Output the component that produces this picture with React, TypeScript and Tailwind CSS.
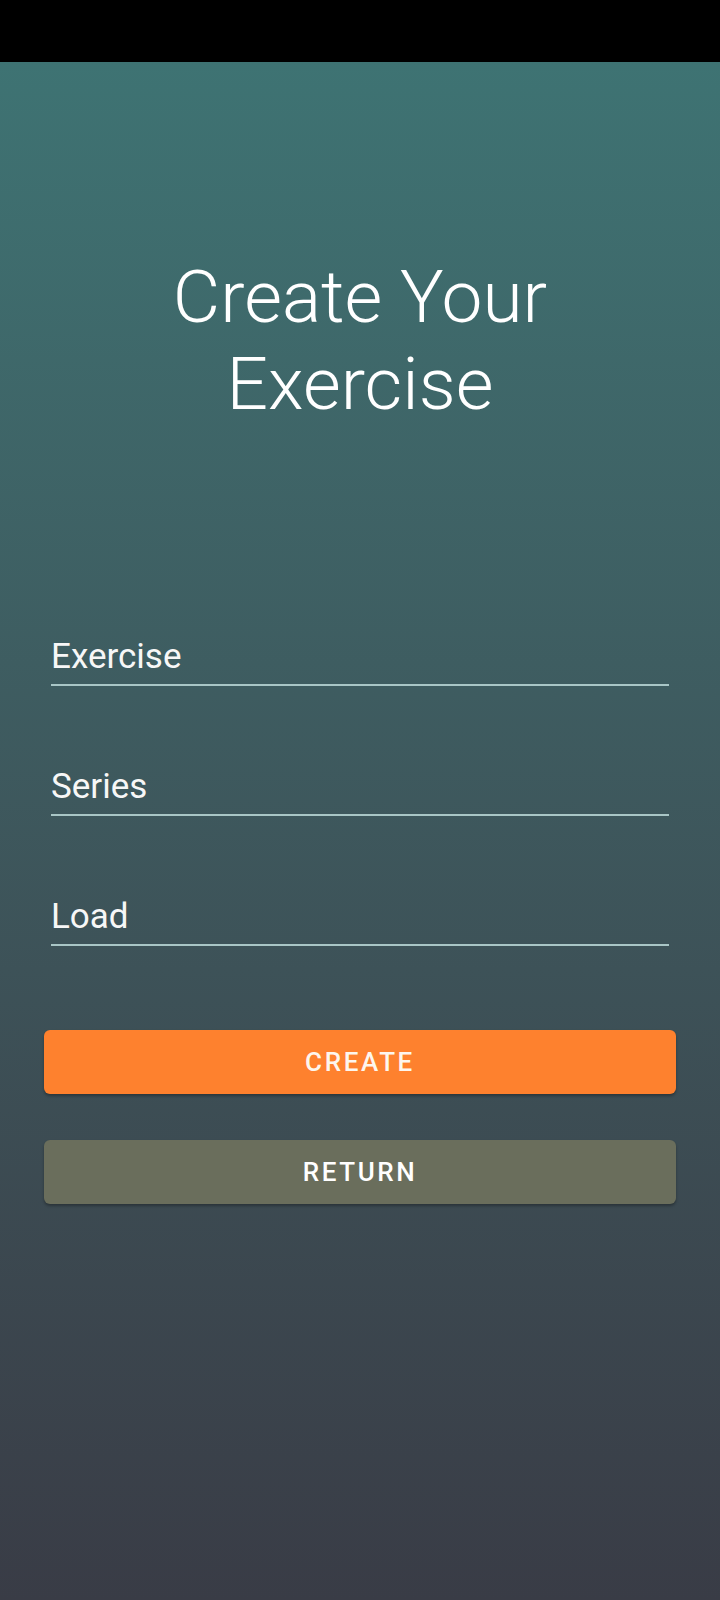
// Create exercise screen
export default function App() {
  const fields = ["Exercise", "Series", "Load"];

  return (
    <div className="flex min-h-[1600px] flex-col bg-black font-['Roboto',sans-serif]">
      {/* status bar */}
      <div className="h-[62px] shrink-0 bg-black" />

      <div className="flex flex-1 flex-col bg-linear-to-b from-[#3e7373] to-[#393c46] px-[51px]">
        <h1 className="mt-[192px] text-center text-[73px] font-light leading-[87px] text-white">
          Create Your
          <br />
          Exercise
        </h1>

        <div className="mt-[210px] flex flex-col gap-[82px]">
          {fields.map((f) => (
            <div
              key={f}
              className="border-b-2 border-[#a9c6c6] pb-2 text-[35px] leading-[38px] text-[#f7f7f7]"
            >
              {f}
            </div>
          ))}
        </div>

        <div className="-mx-[7px] mt-[84px] flex flex-col gap-[46px]">
          <button className="h-[64px] rounded-[6px] bg-[#fe812e] text-[26px] font-medium uppercase tracking-[0.1em] text-[#fdf6ee] shadow-[0_2px_3px_rgba(0,0,0,0.3)]">
            Create
          </button>
          <button className="h-[64px] rounded-[6px] bg-[#6a6e5c] text-[26px] font-medium uppercase tracking-[0.1em] text-white shadow-[0_2px_3px_rgba(0,0,0,0.3)]">
            Return
          </button>
        </div>
      </div>
    </div>
  );
}
